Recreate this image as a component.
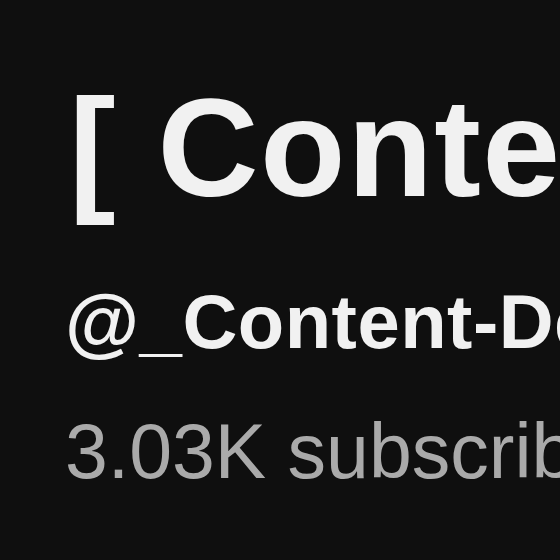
export default function App() {
  return (
    <div className="w-[560px] h-[560px] overflow-hidden bg-[#0f0f0f] pl-[65px] pt-[78px] whitespace-nowrap font-['Liberation_Sans',Arial,sans-serif]">
      <div className="ml-[4px] text-[140px] leading-[140px] font-bold tracking-[1.5px] text-[#f1f1f1]">[ Content-Dev ]</div>
      <div className="mt-[66px] text-[76px] leading-[76px] font-bold tracking-[0.5px] text-[#f1f1f1]">@_Content-Dev</div>
      <div className="mt-[53px] text-[77px] leading-[77px] text-[#aaaaaa]">3.03K subscribers</div>
    </div>
  );
}
